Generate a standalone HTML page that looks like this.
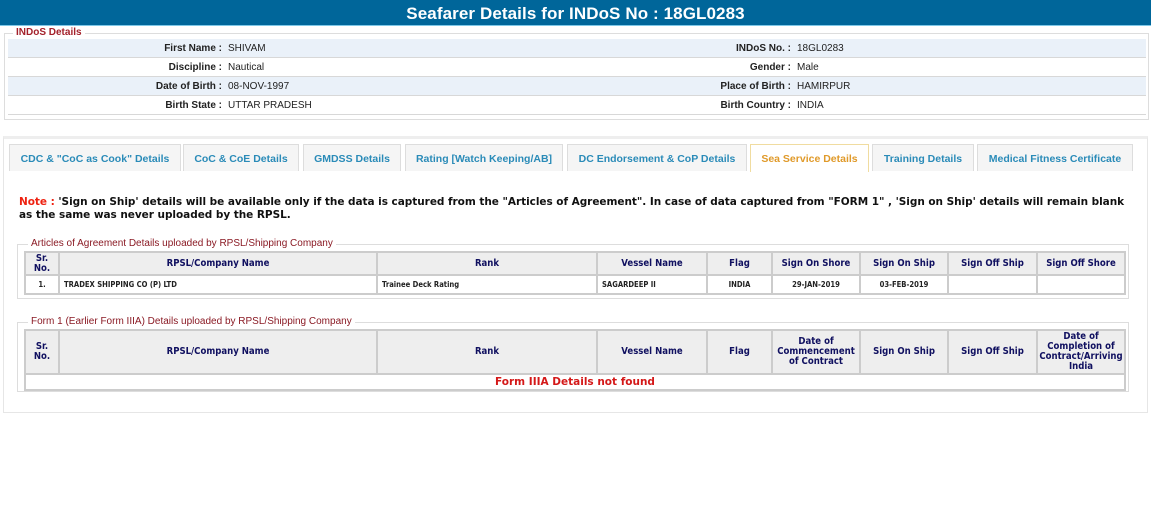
<!DOCTYPE html>
<html><head><meta charset="utf-8"><style>
*{margin:0;padding:0;box-sizing:border-box}
body{width:1151px;height:519px;background:#fff;position:relative;font-family:"Liberation Sans",Arial,sans-serif;overflow:hidden}
.a{position:absolute}
.hdr{left:0;top:0;width:1151px;height:26px;background:#00669a;color:#fff;font:bold 17px "Liberation Sans",sans-serif;text-align:center;line-height:28px;border-bottom:1px solid #7ec8e8;letter-spacing:0.1px}
.fs{border:1px solid #ddd}
.leg{background:#fff;color:#a3202a;font-weight:bold;padding:0 3px}
.row{left:8px;width:1138px;height:19px;border-bottom:1px solid #d8d8d8;font-size:10px;color:#222}
.row.alt{background:#eaf1f9}
.row span{position:absolute;top:4px}
.l1{right:924px;font-weight:bold;text-align:right}
.v1{left:220px}
.l2{right:355px;font-weight:bold;text-align:right}
.v2{left:789px}
.tab{top:144px;height:27px;border:1px solid #ddd;border-bottom:none;background:#f5f5f5;color:#2a8bb8;font:bold 10.5px "Liberation Sans",sans-serif;text-align:center;line-height:28px}
.note{left:19px;font:bold 10.5px "DejaVu Sans",Verdana,sans-serif;color:#111;white-space:nowrap;letter-spacing:-0.04px}
table{position:absolute;border-collapse:collapse;font-family:"DejaVu Sans Condensed","DejaVu Sans",sans-serif}
td,th{border:2px solid #ccc;font-size:9.5px;line-height:10px}
th{background:#eee;color:#101060;font-weight:bold}
td{font-size:7.6px;font-weight:bold;color:#222;padding:0 4px}
</style></head><body>
<div class="a hdr">Seafarer Details for INDoS No : 18GL0283</div>

<div class="a fs" style="left:4px;top:33px;width:1145px;height:87px"></div>
<div class="a leg" style="left:13px;top:27px;font-size:10px">INDoS Details</div>
<div class="a row alt" style="top:39px"><span class="l1">First Name :</span><span class="v1">SHIVAM</span><span class="l2">INDoS No. :</span><span class="v2">18GL0283</span></div>
<div class="a row" style="top:58px"><span class="l1">Discipline :</span><span class="v1">Nautical</span><span class="l2">Gender :</span><span class="v2">Male</span></div>
<div class="a row alt" style="top:77px"><span class="l1">Date of Birth :</span><span class="v1">08-NOV-1997</span><span class="l2">Place of Birth :</span><span class="v2">HAMIRPUR</span></div>
<div class="a row" style="top:96px"><span class="l1">Birth State :</span><span class="v1">UTTAR PRADESH</span><span class="l2">Birth Country :</span><span class="v2">INDIA</span></div>

<div class="a" style="left:3px;top:136px;width:1145px;height:277px;border:1px solid #e6e6e6;border-top:3px solid #eee"></div>
<div class="a tab" style="left:9px;width:172px">CDC &amp; "CoC as Cook" Details</div>
<div class="a tab" style="left:183px;width:116px">CoC &amp; CoE Details</div>
<div class="a tab" style="left:303px;width:98px">GMDSS Details</div>
<div class="a tab" style="left:405px;width:158px">Rating [Watch Keeping/AB]</div>
<div class="a tab" style="left:567px;width:180px">DC Endorsement &amp; CoP Details</div>
<div class="a tab" style="left:750px;width:119px;background:#fff;color:#e09a2a;border-color:#f0dca0;height:28px">Sea Service Details</div>
<div class="a tab" style="left:872px;width:102px">Training Details</div>
<div class="a tab" style="left:977px;width:156px">Medical Fitness Certificate</div>

<div class="a note" style="top:196px"><span style="color:#e21">Note :</span> 'Sign on Ship' details will be available only if the data is captured from the "Articles of Agreement". In case of data captured from "FORM 1" , 'Sign on Ship' details will remain blank</div>
<div class="a note" style="top:209px">as the same was never uploaded by the RPSL.</div>

<div class="a fs" style="left:17px;top:244px;width:1112px;height:55px"></div>
<div class="a leg" style="left:28px;top:238px;font-size:10px;font-weight:normal;color:#8a1a24">Articles of Agreement Details uploaded by RPSL/Shipping Company</div>
<table style="left:24px;top:251px;width:1102px">
<tr style="height:23px"><th style="width:34px">Sr.<br>No.</th><th style="width:318px">RPSL/Company Name</th><th style="width:220px">Rank</th><th style="width:110px">Vessel Name</th><th style="width:65px">Flag</th><th style="width:88px">Sign On Shore</th><th style="width:88px">Sign On Ship</th><th style="width:89px">Sign Off Ship</th><th>Sign Off Shore</th></tr>
<tr style="height:19px"><td style="text-align:center">1.</td><td>TRADEX SHIPPING CO (P) LTD</td><td>Trainee Deck Rating</td><td>SAGARDEEP II</td><td style="text-align:center">INDIA</td><td style="text-align:center">29-JAN-2019</td><td style="text-align:center">03-FEB-2019</td><td></td><td></td></tr>
</table>

<div class="a fs" style="left:17px;top:322px;width:1112px;height:70px"></div>
<div class="a leg" style="left:28px;top:316px;font-size:10px;font-weight:normal;color:#8a1a24">Form 1 (Earlier Form IIIA) Details uploaded by RPSL/Shipping Company</div>
<table style="left:24px;top:329px;width:1102px">
<tr style="height:44px"><th style="width:34px">Sr.<br>No.</th><th style="width:318px">RPSL/Company Name</th><th style="width:220px">Rank</th><th style="width:110px">Vessel Name</th><th style="width:65px">Flag</th><th style="width:88px">Date of<br>Commencement<br>of Contract</th><th style="width:88px">Sign On Ship</th><th style="width:89px">Sign Off Ship</th><th>Date of<br>Completion of<br>Contract/Arriving<br>India</th></tr>
<tr style="height:16px"><td colspan="9" style="text-align:center;color:#d41818;font-size:10.5px;font-family:'DejaVu Sans',sans-serif">Form IIIA Details not found</td></tr>
</table>
</body></html>
